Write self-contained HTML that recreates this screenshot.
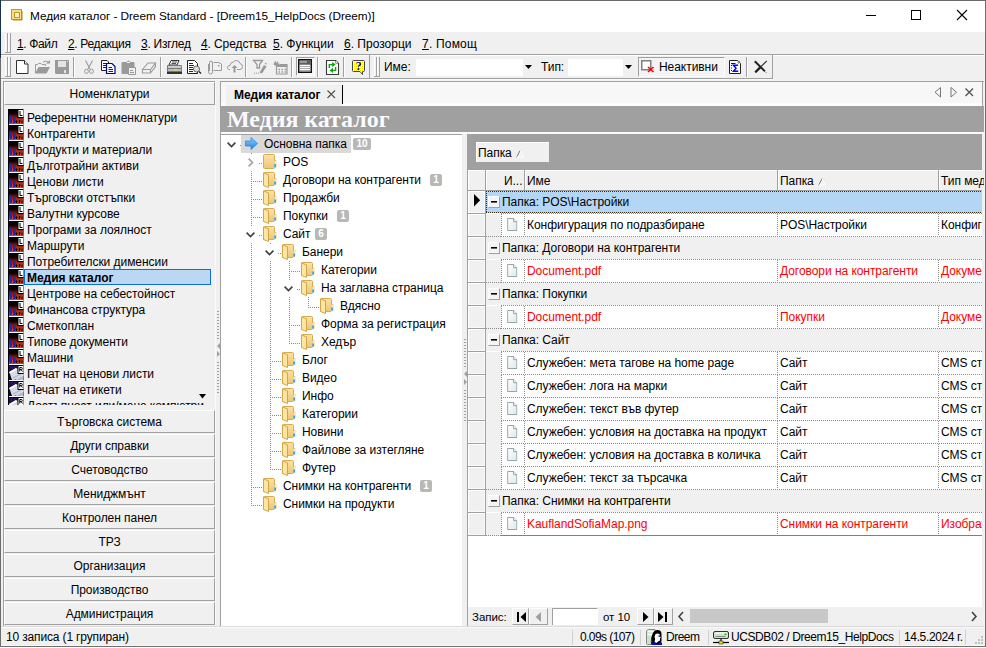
<!DOCTYPE html><html><head><meta charset="utf-8"><title>Медия каталог</title><style>
*{margin:0;padding:0;box-sizing:border-box}
html,body{width:986px;height:648px;overflow:hidden;background:#f0f0f0}
body{position:relative;font-family:"Liberation Sans",sans-serif;font-size:12px;color:#000}
div{position:absolute}
.t{white-space:nowrap;line-height:16px;letter-spacing:-0.05px}
svg{position:absolute;overflow:visible}
</style></head><body>
<div style="left:0px;top:0px;width:986px;height:32px;background:#fff"></div>
<div class="t" style="left:30px;top:8px;font-size:11.8px">Медия каталог - Dreem Standard - [Dreem15_HelpDocs (Dreem)]</div>
<svg style="left:11px;top:9px" width="12" height="12"><rect x="0.5" y="0.5" width="10" height="10" fill="#f3dc8c" stroke="#c89a1a"/><rect x="3.5" y="3.5" width="5" height="5" fill="#f8ecc0" stroke="#c89a1a"/><path d="M11 2V11H2" stroke="#b8860b" fill="none"/></svg>
<div style="left:866px;top:15px;width:10px;height:1px;background:#000"></div>
<div style="left:911px;top:10px;width:10px;height:10px;border:1px solid #000"></div>
<svg style="left:956px;top:9px" width="12" height="12"><path d="M1 1L11 11M11 1L1 11" stroke="#000" stroke-width="1.1"/></svg>
<div class="t" style="left:17px;top:36px;font-size:12px;letter-spacing:-0.37px"><span style="text-decoration:underline">1</span>. Файл</div>
<div class="t" style="left:68px;top:36px;font-size:12px;letter-spacing:-0.33px"><span style="text-decoration:underline">2</span>. Редакция</div>
<div class="t" style="left:141px;top:36px;font-size:12px;letter-spacing:-0.26px"><span style="text-decoration:underline">3</span>. Изглед</div>
<div class="t" style="left:201px;top:36px;font-size:12px;letter-spacing:-0.1px"><span style="text-decoration:underline">4</span>. Средства</div>
<div class="t" style="left:273px;top:36px;font-size:12px;letter-spacing:0px"><span style="text-decoration:underline">5</span>. Функции</div>
<div class="t" style="left:344px;top:36px;font-size:12px;letter-spacing:0px"><span style="text-decoration:underline">6</span>. Прозорци</div>
<div class="t" style="left:422px;top:36px;font-size:12px;letter-spacing:0.2px"><span style="text-decoration:underline">7</span>. Помощ</div>
<div style="left:5px;top:33px;width:3px;height:20px;border-left:1px solid #fff;border-right:1px solid #a0a0a0"></div>
<div style="left:8px;top:33px;width:3px;height:20px;border-left:1px solid #fff;border-right:1px solid #a0a0a0"></div>
<div style="left:5px;top:52px;width:6px;height:1px;background:#a0a0a0"></div>
<div style="left:1px;top:54px;width:984px;height:1px;background:#a0a0a0"></div>
<div style="left:1px;top:55px;width:984px;height:1px;background:#fff"></div>
<div style="left:1px;top:78px;width:772px;height:1px;background:#a0a0a0"></div>
<div style="left:1px;top:79px;width:772px;height:1px;background:#fafafa"></div>
<div style="left:369px;top:55px;width:1px;height:23px;background:#a0a0a0"></div>
<div style="left:772px;top:55px;width:1px;height:23px;background:#a0a0a0"></div>
<div style="left:5px;top:57px;width:3px;height:20px;border-left:1px solid #fff;border-right:1px solid #a0a0a0"></div>
<div style="left:8px;top:57px;width:3px;height:20px;border-left:1px solid #fff;border-right:1px solid #a0a0a0"></div>
<div style="left:5px;top:76px;width:6px;height:1px;background:#a0a0a0"></div>
<div style="left:374px;top:57px;width:3px;height:20px;border-left:1px solid #fff;border-right:1px solid #a0a0a0"></div>
<div style="left:377px;top:57px;width:3px;height:20px;border-left:1px solid #fff;border-right:1px solid #a0a0a0"></div>
<div style="left:374px;top:76px;width:6px;height:1px;background:#a0a0a0"></div>
<div style="left:73px;top:57px;width:1px;height:20px;background:#a0a0a0"></div>
<div style="left:74px;top:57px;width:1px;height:20px;background:#fff"></div>
<div style="left:160px;top:57px;width:1px;height:20px;background:#a0a0a0"></div>
<div style="left:161px;top:57px;width:1px;height:20px;background:#fff"></div>
<div style="left:245px;top:57px;width:1px;height:20px;background:#a0a0a0"></div>
<div style="left:246px;top:57px;width:1px;height:20px;background:#fff"></div>
<div style="left:291px;top:57px;width:1px;height:20px;background:#a0a0a0"></div>
<div style="left:292px;top:57px;width:1px;height:20px;background:#fff"></div>
<div style="left:317px;top:57px;width:1px;height:20px;background:#a0a0a0"></div>
<div style="left:318px;top:57px;width:1px;height:20px;background:#fff"></div>
<div style="left:343px;top:57px;width:1px;height:20px;background:#a0a0a0"></div>
<div style="left:344px;top:57px;width:1px;height:20px;background:#fff"></div>
<div style="left:746px;top:57px;width:1px;height:20px;background:#a0a0a0"></div>
<div style="left:747px;top:57px;width:1px;height:20px;background:#fff"></div>
<div class="t" style="left:384px;top:59px;">Име:</div>
<div style="left:416px;top:59px;width:118px;height:17px;background:#fff"></div>
<div style="left:523px;top:59px;width:11px;height:17px;background:#f0f0f0"></div>
<svg style="left:525px;top:65px" width="8" height="5"><path d="M0 0H7L3.5 4Z" fill="#000"/></svg>
<div class="t" style="left:541px;top:59px;">Тип:</div>
<div style="left:568px;top:59px;width:66px;height:17px;background:#fff"></div>
<div style="left:623px;top:59px;width:11px;height:17px;background:#f0f0f0"></div>
<svg style="left:625px;top:65px" width="8" height="5"><path d="M0 0H7L3.5 4Z" fill="#000"/></svg>
<div style="left:638px;top:57px;width:87px;height:20px;border:1px solid #a0a0a0;border-right-color:#fff;border-bottom-color:#fff;background:#f4f4f4"></div>
<div class="t" style="left:659px;top:59px;">Неактивни</div>
<svg style="left:16px;top:60px" width="13" height="15"><path d="M0.5 0.5H8.5L12 4V13.5H0.5Z" fill="#fff" stroke="#333" stroke-width="1"/><path d="M8.5 0.5V4H12" fill="#fff" stroke="#333"/></svg>
<svg style="left:35px;top:60px" width="16" height="14"><path d="M0.5 13V4.5H2.5L3.5 3.5H6L7 4.5H10.5V6" fill="none" stroke="#9a9a9a"/><path d="M0 13.5L3.5 7H15L11.5 13.5Z" fill="#9a9a9a"/><path d="M8 2.5Q10 0 12.5 1.5L13.5 3" fill="none" stroke="#9a9a9a"/><path d="M11 3.5H15V0Z" fill="#9a9a9a"/></svg>
<svg style="left:55px;top:60px" width="14" height="14"><path d="M0 0H14V14H1L0 13Z" fill="#9a9a9a"/><rect x="3" y="1" width="8" height="6" fill="#e4e4e4"/><rect x="9" y="10" width="2" height="3" fill="#e4e4e4"/><rect x="12" y="1" width="1" height="1" fill="#e4e4e4"/></svg>
<svg style="left:84px;top:60px" width="10" height="14"><path d="M1.5 0.5L6 9M8.5 0.5L4 9" stroke="#9a9a9a" stroke-width="1.1" fill="none"/><ellipse cx="2.5" cy="11.3" rx="1.9" ry="2.1" fill="none" stroke="#9a9a9a"/><ellipse cx="7.5" cy="11.3" rx="1.9" ry="2.1" fill="none" stroke="#9a9a9a"/></svg>
<svg style="left:101px;top:60px" width="15" height="14"><path d="M0.5 0.5H6L7.5 2V10.5H0.5Z" fill="#fff" stroke="#222"/><path d="M2 3.5H5M2 5.5H5M2 7.5H5" stroke="#222"/><path d="M5.5 3.5H11L14 6.5V13.5H5.5Z" fill="#fff" stroke="#00009a" stroke-width="1.2"/><path d="M7.5 7.5H11M7.5 9.5H12M7.5 11.5H12" stroke="#222"/></svg>
<svg style="left:121px;top:60px" width="16" height="15"><path d="M1.5 2H5.5L7.5 0.5L9.5 2H12.5Q13.5 2 13.5 3V13Q13.5 14 12.5 14H1.5Q0.5 14 0.5 13V3Q0.5 2 1.5 2Z" fill="#9a9a9a"/><path d="M6 2.5H9" stroke="#fff"/><path d="M7.5 7.5H14.5V14.5H7.5Z" fill="#f0f0f0" stroke="#9a9a9a"/><path d="M9 10.5H12M9 12.5H13" stroke="#9a9a9a"/></svg>
<svg style="left:142px;top:62px" width="14" height="12"><path d="M0.5 7.5L6 1H13.5L8.5 7.5ZM0.5 7.5V11H8.5V7.5M8.5 11L13.5 4.5V1" fill="none" stroke="#9a9a9a" stroke-width="1.1"/></svg>
<svg style="left:167px;top:60px" width="16" height="14"><path d="M4 0.5H12L10 5H2Z" fill="#fff" stroke="#333"/><path d="M5 2H10M4.5 3.5H9" stroke="#555"/><path d="M1 5H14Q15 5 15 6V12H0V6Q0 5 1 5Z" fill="#777"/><rect x="1" y="6" width="13" height="2" fill="#ccc"/><rect x="1" y="9" width="13" height="2" fill="#bbb"/><rect x="7" y="9" width="3" height="1.5" fill="#ffe000"/><rect x="0" y="12" width="15" height="2" fill="#333"/><path d="M13 5.5L15 7M13 8.5L15 10" stroke="#999"/></svg>
<svg style="left:187px;top:60px" width="15" height="15"><path d="M0.5 0.5H7.5L10.5 3.5V13.5H0.5Z" fill="#fff" stroke="#222"/><path d="M2 3.5H6M2 5.5H7M2 7.5H6M2 9.5H6M2 11.5H6" stroke="#1010d0"/><circle cx="9.5" cy="9" r="3" fill="#ddd" stroke="#666"/><path d="M12 11.5L14 13.5" stroke="#222" stroke-width="1.5"/></svg>
<svg style="left:207px;top:60px" width="16" height="15"><path d="M6.5 2.5H11.5L14.5 4V10.5H6.5" fill="none" stroke="#9a9a9a"/><rect x="11" y="5" width="1.5" height="1.5" fill="#9a9a9a"/><path d="M1.5 4V12Q1.5 14 3.5 14Q5.5 14 5.5 12V3Q5.5 1 4 1Q2.5 1 2.5 3V11" fill="none" stroke="#9a9a9a"/></svg>
<svg style="left:227px;top:60px" width="16" height="13"><path d="M3 9.5H1.5Q0.5 9 0.5 7.5Q0.5 5.5 3 5.5Q3.5 2 6.5 2Q7.5 0.5 9.5 0.5Q12.5 0.5 13 3.5Q15.5 4 15.5 6.5Q15.5 9.5 13 9.5H10" fill="none" stroke="#9a9a9a"/><path d="M4.5 8L7.5 5L10.5 8H8.5V12.5H6.5V8Z" fill="#9a9a9a"/></svg>
<svg style="left:253px;top:60px" width="14" height="14"><path d="M0.5 0.5H9.5L6.5 4.5V8H4V4.5Z" fill="none" stroke="#9a9a9a" stroke-width="1.3"/><path d="M6.5 12.5L11 5L13.5 6.5L9 13.5Z" fill="#9a9a9a"/><path d="M11.5 4L13 2.5L14 4.5Z" fill="#9a9a9a"/><path d="M1 13.2H2M3 13.2H4M5 13.2H6" stroke="#9a9a9a"/></svg>
<svg style="left:273px;top:60px" width="15" height="15"><path d="M0.5 4.5L2 0.5L3.5 3L5 1L5.5 4L7 3.5L5 7L3 6Z" fill="#9a9a9a"/><path d="M3.5 6V14H14V4.5H6.5" fill="none" stroke="#9a9a9a" stroke-width="1.2"/><path d="M5 5H14V7H5Z" fill="#9a9a9a"/><path d="M5.5 9.5H7M8.5 9.5H10M11.5 9.5H13M5.5 12H7M8.5 12H10M11.5 12H13" stroke="#9a9a9a" stroke-width="1.3"/></svg>
<div style="left:296px;top:57px;width:19px;height:19px;border:1px solid #a0a0a0;border-right-color:#fff;border-bottom-color:#fff;background:repeating-conic-gradient(#f0f0f0 0 25%,#fafafa 0 50%) 0 0/2px 2px"></div>
<svg style="left:298px;top:59px" width="14" height="14"><rect x="0.75" y="0.75" width="12.5" height="12.5" fill="#fff" stroke="#111" stroke-width="1.5"/><rect x="1.5" y="1.5" width="11" height="3" fill="#555"/><rect x="2" y="2" width="7" height="2" fill="#999"/><path d="M1.5 5H12.5" stroke="#111"/><path d="M1.5 7.5H12.5M1.5 9.5H12.5M1.5 11.5H12.5" stroke="#aaa"/></svg>
<svg style="left:326px;top:60px" width="14" height="15"><path d="M0.5 0.5H9.5L12.5 3.5V14.5H0.5Z" fill="#fff" stroke="#3a3a3a" stroke-width="1.1"/><circle cx="10.5" cy="2.3" r="1.2" fill="#fff" stroke="#3a3a3a" stroke-width="0.6"/><path d="M3.3 8V4.6H7" fill="none" stroke="#10a010" stroke-width="1.4"/><path d="M6.2 2L9.6 4.6L6.2 7.2Z" fill="#10a010"/><path d="M9.6 7V10.4H6" fill="none" stroke="#10a010" stroke-width="1.4"/><path d="M7 7.8L3.6 10.4L7 13Z" fill="#10a010"/></svg>
<svg style="left:352px;top:60px" width="13" height="15"><defs><pattern id="pY" width="2" height="2" patternUnits="userSpaceOnUse"><rect width="1" height="1" fill="#ffe800"/></pattern></defs><path d="M1.5 0.5H11.5Q12.5 0.5 12.5 1.5V10.5Q12.5 11.5 11.5 11.5H10.5L10.5 14.5L8 11.5H1.5Q0.5 11.5 0.5 10.5V1.5Q0.5 0.5 1.5 0.5Z" fill="#fff" stroke="#444"/><rect x="1" y="1" width="11" height="10" fill="url(#pY)"/><text x="6.7" y="9.6" font-family="Liberation Serif" font-weight="bold" font-size="12" fill="#0000a8" text-anchor="middle">?</text></svg>
<svg style="left:641px;top:60px" width="14" height="13"><rect x="0.75" y="0.75" width="9" height="9" fill="#fff" stroke="#808080" stroke-width="1.5"/><path d="M7 7L12.5 12M12.5 7L7 12" stroke="#f00" stroke-width="1.6"/></svg>
<svg style="left:729px;top:60px" width="13" height="14"><path d="M0.5 0.5H8.5L11.5 3.5V13.5H0.5Z" fill="#fff" stroke="#222"/><circle cx="9.8" cy="2.2" r="1" fill="#fff" stroke="#222" stroke-width="0.6"/><path d="M2 3.5H6.5" stroke="#0000e0"/><path d="M2.5 5V6M2.5 7.5V8.5M2.5 10V11" stroke="#0000e0"/><path d="M9 5.3H4.5L7 8.2L4.5 11.2H9.2" fill="none" stroke="#0000ff" stroke-width="1.5"/></svg>
<svg style="left:754px;top:60px" width="14" height="14"><path d="M0.8 1.2L11 11.4" stroke="#222" stroke-width="2"/><path d="M12 12.4L12.6 13" stroke="#444"/><path d="M12.8 0.8L7 6.6" stroke="#333" stroke-width="1.2"/><path d="M7 6.6L1.2 12.4" stroke="#222" stroke-width="2.2"/></svg>
<div style="left:3px;top:81px;width:213px;height:545px;border:1px solid #a0a0a0;border-right:none;border-bottom:none"></div>
<div style="left:4px;top:82px;width:211px;height:23px;background:#f0f0f0;border-top:1px solid #fff;border-left:1px solid #fff;border-bottom:1px solid #a0a0a0;border-right:1px solid #a0a0a0"></div>
<div class="t" style="left:4px;top:86px;font-size:12px"><div style="position:static;width:211px;text-align:center">Номенклатури</div></div>
<div style="left:4px;top:105px;width:211px;height:300px;overflow:hidden">
<svg style="left:4px;top:4px" width="16" height="16"><use href="#icL"/></svg>
<div class="t" style="left:23px;top:5px">Референтни номенклатури</div>
<svg style="left:4px;top:20px" width="16" height="16"><use href="#icL"/></svg>
<div class="t" style="left:23px;top:21px">Контрагенти</div>
<svg style="left:4px;top:36px" width="16" height="16"><use href="#icL"/></svg>
<div class="t" style="left:23px;top:37px">Продукти и материали</div>
<svg style="left:4px;top:52px" width="16" height="16"><use href="#icL"/></svg>
<div class="t" style="left:23px;top:53px">Дълготрайни активи</div>
<svg style="left:4px;top:68px" width="16" height="16"><use href="#icL"/></svg>
<div class="t" style="left:23px;top:69px">Ценови листи</div>
<svg style="left:4px;top:84px" width="16" height="16"><use href="#icL"/></svg>
<div class="t" style="left:23px;top:85px">Търговски отстъпки</div>
<svg style="left:4px;top:100px" width="16" height="16"><use href="#icL"/></svg>
<div class="t" style="left:23px;top:101px">Валутни курсове</div>
<svg style="left:4px;top:116px" width="16" height="16"><use href="#icL"/></svg>
<div class="t" style="left:23px;top:117px">Програми за лоялност</div>
<svg style="left:4px;top:132px" width="16" height="16"><use href="#icL"/></svg>
<div class="t" style="left:23px;top:133px">Маршрути</div>
<svg style="left:4px;top:148px" width="16" height="16"><use href="#icL"/></svg>
<div class="t" style="left:23px;top:149px">Потребителски дименсии</div>
<svg style="left:4px;top:164px" width="16" height="16"><use href="#icL"/></svg>
<div style="left:20px;top:164px;width:187px;height:16px;background:#bad8f3;border:1px solid #0a6fd8"></div>
<div class="t" style="left:23px;top:165px;font-weight:bold">Медия каталог</div>
<svg style="left:4px;top:180px" width="16" height="16"><use href="#icL"/></svg>
<div class="t" style="left:23px;top:181px">Центрове на себестойност</div>
<svg style="left:4px;top:196px" width="16" height="16"><use href="#icL"/></svg>
<div class="t" style="left:23px;top:197px">Финансова структура</div>
<svg style="left:4px;top:212px" width="16" height="16"><use href="#icL"/></svg>
<div class="t" style="left:23px;top:213px">Сметкоплан</div>
<svg style="left:4px;top:228px" width="16" height="16"><use href="#icL"/></svg>
<div class="t" style="left:23px;top:229px">Типове документи</div>
<svg style="left:4px;top:244px" width="16" height="16"><use href="#icL"/></svg>
<div class="t" style="left:23px;top:245px">Машини</div>
<svg style="left:4px;top:260px" width="16" height="16"><use href="#icR"/></svg>
<div class="t" style="left:23px;top:261px">Печат на ценови листи</div>
<svg style="left:4px;top:276px" width="16" height="16"><use href="#icR"/></svg>
<div class="t" style="left:23px;top:277px">Печат на етикети</div>
<svg style="left:4px;top:292px" width="16" height="16"><use href="#icR"/></svg>
<div class="t" style="left:23px;top:293px">Достъпност или/мене компютри</div>
</div>
<svg style="left:199px;top:394px" width="8" height="6"><path d="M0 0H7L3.5 4.5Z" fill="#000"/></svg>
<div style="left:4px;top:410px;width:211px;height:23px;background:#f0f0f0;border-top:1px solid #fff;border-left:1px solid #fff;border-bottom:1px solid #a0a0a0;border-right:1px solid #a0a0a0"></div>
<div class="t" style="left:4px;top:414px;width:211px;text-align:center">Търговска система</div>
<div style="left:4px;top:434px;width:211px;height:23px;background:#f0f0f0;border-top:1px solid #fff;border-left:1px solid #fff;border-bottom:1px solid #a0a0a0;border-right:1px solid #a0a0a0"></div>
<div class="t" style="left:4px;top:438px;width:211px;text-align:center">Други справки</div>
<div style="left:4px;top:458px;width:211px;height:23px;background:#f0f0f0;border-top:1px solid #fff;border-left:1px solid #fff;border-bottom:1px solid #a0a0a0;border-right:1px solid #a0a0a0"></div>
<div class="t" style="left:4px;top:462px;width:211px;text-align:center">Счетоводство</div>
<div style="left:4px;top:482px;width:211px;height:23px;background:#f0f0f0;border-top:1px solid #fff;border-left:1px solid #fff;border-bottom:1px solid #a0a0a0;border-right:1px solid #a0a0a0"></div>
<div class="t" style="left:4px;top:486px;width:211px;text-align:center">Мениджмънт</div>
<div style="left:4px;top:506px;width:211px;height:23px;background:#f0f0f0;border-top:1px solid #fff;border-left:1px solid #fff;border-bottom:1px solid #a0a0a0;border-right:1px solid #a0a0a0"></div>
<div class="t" style="left:4px;top:510px;width:211px;text-align:center">Контролен панел</div>
<div style="left:4px;top:530px;width:211px;height:23px;background:#f0f0f0;border-top:1px solid #fff;border-left:1px solid #fff;border-bottom:1px solid #a0a0a0;border-right:1px solid #a0a0a0"></div>
<div class="t" style="left:4px;top:534px;width:211px;text-align:center">ТРЗ</div>
<div style="left:4px;top:554px;width:211px;height:23px;background:#f0f0f0;border-top:1px solid #fff;border-left:1px solid #fff;border-bottom:1px solid #a0a0a0;border-right:1px solid #a0a0a0"></div>
<div class="t" style="left:4px;top:558px;width:211px;text-align:center">Организация</div>
<div style="left:4px;top:578px;width:211px;height:23px;background:#f0f0f0;border-top:1px solid #fff;border-left:1px solid #fff;border-bottom:1px solid #a0a0a0;border-right:1px solid #a0a0a0"></div>
<div class="t" style="left:4px;top:582px;width:211px;text-align:center">Производство</div>
<div style="left:4px;top:602px;width:211px;height:23px;background:#f0f0f0;border-top:1px solid #fff;border-left:1px solid #fff;border-bottom:1px solid #a0a0a0;border-right:1px solid #a0a0a0"></div>
<div class="t" style="left:4px;top:606px;width:211px;text-align:center">Администрация</div>
<div style="left:220px;top:81px;width:764px;height:545px;border-left:1px solid #a0a0a0;border-top:1px solid #a0a0a0"></div>
<div style="left:221px;top:82px;width:762px;height:24px;background:#fdfdfd;border-right:1px solid #a0a0a0"></div>
<div style="left:221px;top:82px;width:761px;height:21px;background:#f7f7f7"></div>
<div style="left:221px;top:132px;width:763px;height:2px;background:#fafafa"></div>
<div style="left:226px;top:85px;width:116px;height:21px;background:#f0f0f0"></div>
<div style="left:342px;top:85px;width:1px;height:19px;background:#000"></div>
<div class="t" style="left:234px;top:87px;font-weight:bold">Медия каталог</div>
<svg style="left:327px;top:90px" width="9" height="9"><path d="M0.5 0.5L8 8M8 0.5L0.5 8" stroke="#555" stroke-width="1.2"/></svg>
<svg style="left:934px;top:87px" width="8" height="11"><path d="M6.5 0.5V10L1 5.25Z" fill="none" stroke="#777"/></svg>
<svg style="left:950px;top:87px" width="8" height="11"><path d="M1 0.5V10L6.5 5.25Z" fill="none" stroke="#777"/></svg>
<svg style="left:965px;top:88px" width="9" height="9"><path d="M0.5 0.5L8 8M8 0.5L0.5 8" stroke="#555" stroke-width="1.4"/></svg>
<div style="left:221px;top:106px;width:763px;height:26px;background:#a0a0a0"></div>
<div class="t" style="left:227px;top:106px;line-height:26px;font-family:'Liberation Serif',serif;font-weight:bold;font-size:24px;color:#fbfbff">Медия каталог</div>
<div style="left:221px;top:134px;width:241px;height:492px;background:#fff;border-top:1px solid #a0a0a0"></div>
<div style="left:467px;top:134px;width:515px;height:492px;background:#fff;border-left:1px solid #a0a0a0"></div>
<div style="left:982px;top:134px;width:2px;height:492px;background:#f0f0f0"></div>
<div style="left:468px;top:134px;width:514px;height:36px;background:#a0a0a0"></div>
<div style="left:476px;top:142px;width:73px;height:20px;background:#f0f0f0"></div>
<div class="t" style="left:478px;top:145px;">Папка</div>
<div style="left:476px;top:142px;width:73px;height:1px;background:#fff"></div>
<div style="left:476px;top:142px;width:1px;height:20px;background:#fff"></div>
<svg style="left:516px;top:150px" width="9" height="8"><path d="M0.5 7.5L4 0.5" stroke="#808080"/><path d="M4 0.5L7.5 7H0.5" fill="none" stroke="#fff"/></svg>
<div style="left:251px;top:153px;width:1px;height:352px;background:repeating-linear-gradient(to bottom,#8c8c8c 0 1px,transparent 1px 2px)"></div>
<div style="left:270px;top:243px;width:1px;height:226px;background:repeating-linear-gradient(to bottom,#8c8c8c 0 1px,transparent 1px 2px)"></div>
<div style="left:289px;top:261px;width:1px;height:82px;background:repeating-linear-gradient(to bottom,#8c8c8c 0 1px,transparent 1px 2px)"></div>
<div style="left:308px;top:297px;width:1px;height:10px;background:repeating-linear-gradient(to bottom,#8c8c8c 0 1px,transparent 1px 2px)"></div>
<div style="left:240px;top:145px;width:4px;height:1px;background:repeating-linear-gradient(to right,#8c8c8c 0 1px,transparent 1px 2px)"></div>
<div style="left:241px;top:135px;width:110px;height:18px;background:#d9d9d9"></div>
<div style="left:226px;top:136px;width:13px;height:16px;background:#fff"></div>
<svg style="left:227px;top:142px" width="10" height="6"><path d="M0.6 0.6L4.5 4.5L8.4 0.6" stroke="#404040" stroke-width="1.6" fill="none"/></svg>
<svg style="left:245px;top:137px" width="13" height="13"><use href="#icArrow"/></svg>
<div class="t" style="left:264px;top:136px">Основна папка</div>
<div style="left:353px;top:138px;width:18px;height:12px;background:#b8b8b8;border-radius:2px;color:#fff;font-size:10px;font-weight:bold;line-height:12px;text-align:center">10</div>
<div style="left:251px;top:163px;width:11px;height:1px;background:repeating-linear-gradient(to right,#8c8c8c 0 1px,transparent 1px 2px)"></div>
<div style="left:245px;top:154px;width:13px;height:16px;background:#fff"></div>
<svg style="left:248px;top:158px" width="6" height="10"><path d="M0.6 0.6L4.5 4.5L0.6 8.4" stroke="#a0a0a0" stroke-width="1.6" fill="none"/></svg>
<svg style="left:263px;top:154px" width="14" height="16"><use href="#icFc"/></svg>
<div class="t" style="left:283px;top:154px">POS</div>
<div style="left:251px;top:181px;width:11px;height:1px;background:repeating-linear-gradient(to right,#8c8c8c 0 1px,transparent 1px 2px)"></div>
<svg style="left:263px;top:172px" width="14" height="16"><use href="#icFo"/></svg>
<div class="t" style="left:283px;top:172px">Договори на контрагенти</div>
<div style="left:430px;top:174px;width:12px;height:12px;background:#b8b8b8;border-radius:2px;color:#fff;font-size:10px;font-weight:bold;line-height:12px;text-align:center">1</div>
<div style="left:251px;top:199px;width:11px;height:1px;background:repeating-linear-gradient(to right,#8c8c8c 0 1px,transparent 1px 2px)"></div>
<svg style="left:263px;top:190px" width="14" height="16"><use href="#icFo"/></svg>
<div class="t" style="left:283px;top:190px">Продажби</div>
<div style="left:251px;top:217px;width:11px;height:1px;background:repeating-linear-gradient(to right,#8c8c8c 0 1px,transparent 1px 2px)"></div>
<svg style="left:263px;top:208px" width="14" height="16"><use href="#icFo"/></svg>
<div class="t" style="left:283px;top:208px">Покупки</div>
<div style="left:337px;top:210px;width:12px;height:12px;background:#b8b8b8;border-radius:2px;color:#fff;font-size:10px;font-weight:bold;line-height:12px;text-align:center">1</div>
<div style="left:251px;top:235px;width:11px;height:1px;background:repeating-linear-gradient(to right,#8c8c8c 0 1px,transparent 1px 2px)"></div>
<div style="left:245px;top:226px;width:13px;height:16px;background:#fff"></div>
<svg style="left:246px;top:232px" width="10" height="6"><path d="M0.6 0.6L4.5 4.5L8.4 0.6" stroke="#404040" stroke-width="1.6" fill="none"/></svg>
<svg style="left:263px;top:226px" width="14" height="16"><use href="#icFo"/></svg>
<div class="t" style="left:283px;top:226px">Сайт</div>
<div style="left:315px;top:228px;width:12px;height:12px;background:#b8b8b8;border-radius:2px;color:#fff;font-size:10px;font-weight:bold;line-height:12px;text-align:center">6</div>
<div style="left:270px;top:253px;width:11px;height:1px;background:repeating-linear-gradient(to right,#8c8c8c 0 1px,transparent 1px 2px)"></div>
<div style="left:264px;top:244px;width:13px;height:16px;background:#fff"></div>
<svg style="left:265px;top:250px" width="10" height="6"><path d="M0.6 0.6L4.5 4.5L8.4 0.6" stroke="#404040" stroke-width="1.6" fill="none"/></svg>
<svg style="left:282px;top:244px" width="14" height="16"><use href="#icFo"/></svg>
<div class="t" style="left:302px;top:244px">Банери</div>
<div style="left:289px;top:271px;width:11px;height:1px;background:repeating-linear-gradient(to right,#8c8c8c 0 1px,transparent 1px 2px)"></div>
<svg style="left:301px;top:262px" width="14" height="16"><use href="#icFo"/></svg>
<div class="t" style="left:321px;top:262px">Категории</div>
<div style="left:289px;top:289px;width:11px;height:1px;background:repeating-linear-gradient(to right,#8c8c8c 0 1px,transparent 1px 2px)"></div>
<div style="left:283px;top:280px;width:13px;height:16px;background:#fff"></div>
<svg style="left:284px;top:286px" width="10" height="6"><path d="M0.6 0.6L4.5 4.5L8.4 0.6" stroke="#404040" stroke-width="1.6" fill="none"/></svg>
<svg style="left:301px;top:280px" width="14" height="16"><use href="#icFo"/></svg>
<div class="t" style="left:321px;top:280px">На заглавна страница</div>
<div style="left:308px;top:307px;width:11px;height:1px;background:repeating-linear-gradient(to right,#8c8c8c 0 1px,transparent 1px 2px)"></div>
<svg style="left:320px;top:298px" width="14" height="16"><use href="#icFo"/></svg>
<div class="t" style="left:340px;top:298px">Вдясно</div>
<div style="left:289px;top:325px;width:11px;height:1px;background:repeating-linear-gradient(to right,#8c8c8c 0 1px,transparent 1px 2px)"></div>
<svg style="left:301px;top:316px" width="14" height="16"><use href="#icFo"/></svg>
<div class="t" style="left:321px;top:316px">Форма за регистрация</div>
<div style="left:289px;top:343px;width:11px;height:1px;background:repeating-linear-gradient(to right,#8c8c8c 0 1px,transparent 1px 2px)"></div>
<svg style="left:301px;top:334px" width="14" height="16"><use href="#icFo"/></svg>
<div class="t" style="left:321px;top:334px">Хедър</div>
<div style="left:270px;top:361px;width:11px;height:1px;background:repeating-linear-gradient(to right,#8c8c8c 0 1px,transparent 1px 2px)"></div>
<svg style="left:282px;top:352px" width="14" height="16"><use href="#icFo"/></svg>
<div class="t" style="left:302px;top:352px">Блог</div>
<div style="left:270px;top:379px;width:11px;height:1px;background:repeating-linear-gradient(to right,#8c8c8c 0 1px,transparent 1px 2px)"></div>
<svg style="left:282px;top:370px" width="14" height="16"><use href="#icFo"/></svg>
<div class="t" style="left:302px;top:370px">Видео</div>
<div style="left:270px;top:397px;width:11px;height:1px;background:repeating-linear-gradient(to right,#8c8c8c 0 1px,transparent 1px 2px)"></div>
<svg style="left:282px;top:388px" width="14" height="16"><use href="#icFo"/></svg>
<div class="t" style="left:302px;top:388px">Инфо</div>
<div style="left:270px;top:415px;width:11px;height:1px;background:repeating-linear-gradient(to right,#8c8c8c 0 1px,transparent 1px 2px)"></div>
<svg style="left:282px;top:406px" width="14" height="16"><use href="#icFo"/></svg>
<div class="t" style="left:302px;top:406px">Категории</div>
<div style="left:270px;top:433px;width:11px;height:1px;background:repeating-linear-gradient(to right,#8c8c8c 0 1px,transparent 1px 2px)"></div>
<svg style="left:282px;top:424px" width="14" height="16"><use href="#icFo"/></svg>
<div class="t" style="left:302px;top:424px">Новини</div>
<div style="left:270px;top:451px;width:11px;height:1px;background:repeating-linear-gradient(to right,#8c8c8c 0 1px,transparent 1px 2px)"></div>
<svg style="left:282px;top:442px" width="14" height="16"><use href="#icFo"/></svg>
<div class="t" style="left:302px;top:442px">Файлове за изтегляне</div>
<div style="left:270px;top:469px;width:11px;height:1px;background:repeating-linear-gradient(to right,#8c8c8c 0 1px,transparent 1px 2px)"></div>
<svg style="left:282px;top:460px" width="14" height="16"><use href="#icFo"/></svg>
<div class="t" style="left:302px;top:460px">Футер</div>
<div style="left:251px;top:487px;width:11px;height:1px;background:repeating-linear-gradient(to right,#8c8c8c 0 1px,transparent 1px 2px)"></div>
<svg style="left:263px;top:478px" width="14" height="16"><use href="#icFo"/></svg>
<div class="t" style="left:283px;top:478px">Снимки на контрагенти</div>
<div style="left:420px;top:480px;width:12px;height:12px;background:#b8b8b8;border-radius:2px;color:#fff;font-size:10px;font-weight:bold;line-height:12px;text-align:center">1</div>
<div style="left:251px;top:505px;width:11px;height:1px;background:repeating-linear-gradient(to right,#8c8c8c 0 1px,transparent 1px 2px)"></div>
<svg style="left:263px;top:496px" width="14" height="16"><use href="#icFo"/></svg>
<div class="t" style="left:283px;top:496px">Снимки на продукти</div>
<div style="left:462px;top:134px;width:5px;height:492px;background:#f0f0f0"></div>
<div style="left:468px;top:170px;width:514px;height:21px;background:#f0f0f0;border-bottom:1px solid #a0a0a0"></div>
<div style="left:468px;top:170px;width:514px;height:1px;background:#fff"></div>
<div style="left:485px;top:170px;width:1px;height:21px;background:#a0a0a0"></div>
<div style="left:486px;top:170px;width:1px;height:20px;background:#fff"></div>
<div style="left:524px;top:170px;width:1px;height:21px;background:#a0a0a0"></div>
<div style="left:525px;top:170px;width:1px;height:20px;background:#fff"></div>
<div style="left:777px;top:170px;width:1px;height:21px;background:#a0a0a0"></div>
<div style="left:778px;top:170px;width:1px;height:20px;background:#fff"></div>
<div style="left:938px;top:170px;width:1px;height:21px;background:#a0a0a0"></div>
<div style="left:939px;top:170px;width:1px;height:20px;background:#fff"></div>
<div style="left:468px;top:170px;width:1px;height:20px;background:#fff"></div>
<div class="t" style="left:504px;top:173px;">И...</div>
<div class="t" style="left:527px;top:173px;">Име</div>
<div class="t" style="left:780px;top:173px;">Папка</div>
<svg style="left:818px;top:178px" width="9" height="8"><path d="M0.5 7.5L4 0.5" stroke="#808080"/><path d="M4 0.5L7.5 7H0.5" fill="none" stroke="#fff"/></svg>
<div class="t" style="left:941px;top:173px;">Тип медия</div>
<div style="left:468px;top:191px;width:514px;height:346px;overflow:hidden">
<div style="left:0;top:0px;width:18px;height:23px;background:#f0f0f0;border-right:1px solid #a0a0a0;border-bottom:1px solid #a0a0a0;box-shadow:inset 1px 1px 0 #fff,inset -1px -1px 0 #fafafa"></div>
<div style="left:18px;top:0px;width:497px;height:22px;background:#b3d6f5"></div>
<div style="left:33px;top:22px;width:482px;height:1px;background:#f0f0f0;background:repeating-linear-gradient(to right,#8c8c8c 0 1px,transparent 1px 2px)"></div>
<div style="left:20px;top:5px;width:12px;height:12px;background:#f4f4f4;border:1px solid #fff;border-right-color:#a0a0a0;border-bottom-color:#a0a0a0"></div>
<div style="left:23px;top:10px;width:6px;height:2px;background:linear-gradient(#000 50%,#666 50%)"></div>
<div class="t" style="left:34px;top:3px">Папка: POS\Настройки</div>
<div style="left:18px;top:0px;width:497px;height:1px;background:repeating-linear-gradient(to right,#3a2a10 0 1px,transparent 1px 2px)"></div>
<div style="left:18px;top:21px;width:497px;height:1px;background:repeating-linear-gradient(to right,#3a2a10 0 1px,transparent 1px 2px)"></div>
<div style="left:18px;top:0px;width:1px;height:22px;background:repeating-linear-gradient(to bottom,#3a2a10 0 1px,transparent 1px 2px)"></div>
<svg style="left:6px;top:3px" width="7" height="13"><path d="M0 0L6.2 6.2L0 12.4Z" fill="#000"/></svg>
<div style="left:0;top:23px;width:18px;height:23px;background:#f0f0f0;border-right:1px solid #a0a0a0;border-bottom:1px solid #a0a0a0;box-shadow:inset 1px 1px 0 #fff,inset -1px -1px 0 #fafafa"></div>
<div style="left:18px;top:23px;width:15px;height:23px;background:#f0f0f0"></div>
<div style="left:33px;top:23px;width:482px;height:22px;background:#fff"></div>
<div style="left:33px;top:45px;width:482px;height:1px;background:#fff;background:repeating-linear-gradient(to right,#8c8c8c 0 1px,transparent 1px 2px)"></div>
<div style="left:18px;top:45px;width:15px;height:1px;background:repeating-linear-gradient(to right,#8c8c8c 0 1px,transparent 1px 2px)"></div>
<div style="left:33px;top:23px;width:1px;height:22px;background:repeating-linear-gradient(to bottom,#8c8c8c 0 1px,transparent 1px 2px)"></div>
<div style="left:56px;top:23px;width:1px;height:22px;background:repeating-linear-gradient(to bottom,#8c8c8c 0 1px,transparent 1px 2px)"></div>
<div style="left:309px;top:23px;width:1px;height:22px;background:repeating-linear-gradient(to bottom,#8c8c8c 0 1px,transparent 1px 2px)"></div>
<div style="left:470px;top:23px;width:1px;height:22px;background:repeating-linear-gradient(to bottom,#8c8c8c 0 1px,transparent 1px 2px)"></div>
<svg style="left:39px;top:27px" width="10.5" height="13" viewBox="0 0 11 14"><use href="#icDoc"/></svg>
<div class="t" style="left:59px;top:26px;color:#000">Конфигурация по подразбиране</div>
<div class="t" style="left:312px;top:26px;color:#000">POS\Настройки</div>
<div class="t" style="left:473px;top:26px;color:#000">Конфигурация</div>
<div style="left:0;top:46px;width:18px;height:23px;background:#f0f0f0;border-right:1px solid #a0a0a0;border-bottom:1px solid #a0a0a0;box-shadow:inset 1px 1px 0 #fff,inset -1px -1px 0 #fafafa"></div>
<div style="left:18px;top:46px;width:497px;height:22px;background:#f0f0f0"></div>
<div style="left:33px;top:68px;width:482px;height:1px;background:#f0f0f0;background:repeating-linear-gradient(to right,#8c8c8c 0 1px,transparent 1px 2px)"></div>
<div style="left:20px;top:51px;width:12px;height:12px;background:#f4f4f4;border:1px solid #fff;border-right-color:#a0a0a0;border-bottom-color:#a0a0a0"></div>
<div style="left:23px;top:56px;width:6px;height:2px;background:linear-gradient(#000 50%,#666 50%)"></div>
<div class="t" style="left:34px;top:49px">Папка: Договори на контрагенти</div>
<div style="left:0;top:69px;width:18px;height:23px;background:#f0f0f0;border-right:1px solid #a0a0a0;border-bottom:1px solid #a0a0a0;box-shadow:inset 1px 1px 0 #fff,inset -1px -1px 0 #fafafa"></div>
<div style="left:18px;top:69px;width:15px;height:23px;background:#f0f0f0"></div>
<div style="left:33px;top:69px;width:482px;height:22px;background:#fff"></div>
<div style="left:33px;top:91px;width:482px;height:1px;background:#fff;background:repeating-linear-gradient(to right,#8c8c8c 0 1px,transparent 1px 2px)"></div>
<div style="left:18px;top:91px;width:15px;height:1px;background:repeating-linear-gradient(to right,#8c8c8c 0 1px,transparent 1px 2px)"></div>
<div style="left:33px;top:69px;width:1px;height:22px;background:repeating-linear-gradient(to bottom,#8c8c8c 0 1px,transparent 1px 2px)"></div>
<div style="left:56px;top:69px;width:1px;height:22px;background:repeating-linear-gradient(to bottom,#8c8c8c 0 1px,transparent 1px 2px)"></div>
<div style="left:309px;top:69px;width:1px;height:22px;background:repeating-linear-gradient(to bottom,#8c8c8c 0 1px,transparent 1px 2px)"></div>
<div style="left:470px;top:69px;width:1px;height:22px;background:repeating-linear-gradient(to bottom,#8c8c8c 0 1px,transparent 1px 2px)"></div>
<svg style="left:39px;top:73px" width="10.5" height="13" viewBox="0 0 11 14"><use href="#icDoc"/></svg>
<div class="t" style="left:59px;top:72px;color:#ff0000">Document.pdf</div>
<div class="t" style="left:312px;top:72px;color:#ff0000">Договори на контрагенти</div>
<div class="t" style="left:473px;top:72px;color:#ff0000">Документ</div>
<div style="left:0;top:92px;width:18px;height:23px;background:#f0f0f0;border-right:1px solid #a0a0a0;border-bottom:1px solid #a0a0a0;box-shadow:inset 1px 1px 0 #fff,inset -1px -1px 0 #fafafa"></div>
<div style="left:18px;top:92px;width:497px;height:22px;background:#f0f0f0"></div>
<div style="left:33px;top:114px;width:482px;height:1px;background:#f0f0f0;background:repeating-linear-gradient(to right,#8c8c8c 0 1px,transparent 1px 2px)"></div>
<div style="left:20px;top:97px;width:12px;height:12px;background:#f4f4f4;border:1px solid #fff;border-right-color:#a0a0a0;border-bottom-color:#a0a0a0"></div>
<div style="left:23px;top:102px;width:6px;height:2px;background:linear-gradient(#000 50%,#666 50%)"></div>
<div class="t" style="left:34px;top:95px">Папка: Покупки</div>
<div style="left:0;top:115px;width:18px;height:23px;background:#f0f0f0;border-right:1px solid #a0a0a0;border-bottom:1px solid #a0a0a0;box-shadow:inset 1px 1px 0 #fff,inset -1px -1px 0 #fafafa"></div>
<div style="left:18px;top:115px;width:15px;height:23px;background:#f0f0f0"></div>
<div style="left:33px;top:115px;width:482px;height:22px;background:#fff"></div>
<div style="left:33px;top:137px;width:482px;height:1px;background:#fff;background:repeating-linear-gradient(to right,#8c8c8c 0 1px,transparent 1px 2px)"></div>
<div style="left:18px;top:137px;width:15px;height:1px;background:repeating-linear-gradient(to right,#8c8c8c 0 1px,transparent 1px 2px)"></div>
<div style="left:33px;top:115px;width:1px;height:22px;background:repeating-linear-gradient(to bottom,#8c8c8c 0 1px,transparent 1px 2px)"></div>
<div style="left:56px;top:115px;width:1px;height:22px;background:repeating-linear-gradient(to bottom,#8c8c8c 0 1px,transparent 1px 2px)"></div>
<div style="left:309px;top:115px;width:1px;height:22px;background:repeating-linear-gradient(to bottom,#8c8c8c 0 1px,transparent 1px 2px)"></div>
<div style="left:470px;top:115px;width:1px;height:22px;background:repeating-linear-gradient(to bottom,#8c8c8c 0 1px,transparent 1px 2px)"></div>
<svg style="left:39px;top:119px" width="10.5" height="13" viewBox="0 0 11 14"><use href="#icDoc"/></svg>
<div class="t" style="left:59px;top:118px;color:#ff0000">Document.pdf</div>
<div class="t" style="left:312px;top:118px;color:#ff0000">Покупки</div>
<div class="t" style="left:473px;top:118px;color:#ff0000">Документ</div>
<div style="left:0;top:138px;width:18px;height:23px;background:#f0f0f0;border-right:1px solid #a0a0a0;border-bottom:1px solid #a0a0a0;box-shadow:inset 1px 1px 0 #fff,inset -1px -1px 0 #fafafa"></div>
<div style="left:18px;top:138px;width:497px;height:22px;background:#f0f0f0"></div>
<div style="left:33px;top:160px;width:482px;height:1px;background:#f0f0f0;background:repeating-linear-gradient(to right,#8c8c8c 0 1px,transparent 1px 2px)"></div>
<div style="left:20px;top:143px;width:12px;height:12px;background:#f4f4f4;border:1px solid #fff;border-right-color:#a0a0a0;border-bottom-color:#a0a0a0"></div>
<div style="left:23px;top:148px;width:6px;height:2px;background:linear-gradient(#000 50%,#666 50%)"></div>
<div class="t" style="left:34px;top:141px">Папка: Сайт</div>
<div style="left:0;top:161px;width:18px;height:23px;background:#f0f0f0;border-right:1px solid #a0a0a0;border-bottom:1px solid #a0a0a0;box-shadow:inset 1px 1px 0 #fff,inset -1px -1px 0 #fafafa"></div>
<div style="left:18px;top:161px;width:15px;height:23px;background:#f0f0f0"></div>
<div style="left:33px;top:161px;width:482px;height:22px;background:#fff"></div>
<div style="left:33px;top:183px;width:482px;height:1px;background:#fff;background:repeating-linear-gradient(to right,#8c8c8c 0 1px,transparent 1px 2px)"></div>
<div style="left:33px;top:161px;width:1px;height:22px;background:repeating-linear-gradient(to bottom,#8c8c8c 0 1px,transparent 1px 2px)"></div>
<div style="left:56px;top:161px;width:1px;height:22px;background:repeating-linear-gradient(to bottom,#8c8c8c 0 1px,transparent 1px 2px)"></div>
<div style="left:309px;top:161px;width:1px;height:22px;background:repeating-linear-gradient(to bottom,#8c8c8c 0 1px,transparent 1px 2px)"></div>
<div style="left:470px;top:161px;width:1px;height:22px;background:repeating-linear-gradient(to bottom,#8c8c8c 0 1px,transparent 1px 2px)"></div>
<svg style="left:39px;top:165px" width="10.5" height="13" viewBox="0 0 11 14"><use href="#icDoc"/></svg>
<div class="t" style="left:59px;top:164px;color:#000">Служебен: мета тагове на home page</div>
<div class="t" style="left:312px;top:164px;color:#000">Сайт</div>
<div class="t" style="left:473px;top:164px;color:#000">CMS страница</div>
<div style="left:0;top:184px;width:18px;height:23px;background:#f0f0f0;border-right:1px solid #a0a0a0;border-bottom:1px solid #a0a0a0;box-shadow:inset 1px 1px 0 #fff,inset -1px -1px 0 #fafafa"></div>
<div style="left:18px;top:184px;width:15px;height:23px;background:#f0f0f0"></div>
<div style="left:33px;top:184px;width:482px;height:22px;background:#fff"></div>
<div style="left:33px;top:206px;width:482px;height:1px;background:#fff;background:repeating-linear-gradient(to right,#8c8c8c 0 1px,transparent 1px 2px)"></div>
<div style="left:33px;top:184px;width:1px;height:22px;background:repeating-linear-gradient(to bottom,#8c8c8c 0 1px,transparent 1px 2px)"></div>
<div style="left:56px;top:184px;width:1px;height:22px;background:repeating-linear-gradient(to bottom,#8c8c8c 0 1px,transparent 1px 2px)"></div>
<div style="left:309px;top:184px;width:1px;height:22px;background:repeating-linear-gradient(to bottom,#8c8c8c 0 1px,transparent 1px 2px)"></div>
<div style="left:470px;top:184px;width:1px;height:22px;background:repeating-linear-gradient(to bottom,#8c8c8c 0 1px,transparent 1px 2px)"></div>
<svg style="left:39px;top:188px" width="10.5" height="13" viewBox="0 0 11 14"><use href="#icDoc"/></svg>
<div class="t" style="left:59px;top:187px;color:#000">Служебен: лога на марки</div>
<div class="t" style="left:312px;top:187px;color:#000">Сайт</div>
<div class="t" style="left:473px;top:187px;color:#000">CMS страница</div>
<div style="left:0;top:207px;width:18px;height:23px;background:#f0f0f0;border-right:1px solid #a0a0a0;border-bottom:1px solid #a0a0a0;box-shadow:inset 1px 1px 0 #fff,inset -1px -1px 0 #fafafa"></div>
<div style="left:18px;top:207px;width:15px;height:23px;background:#f0f0f0"></div>
<div style="left:33px;top:207px;width:482px;height:22px;background:#fff"></div>
<div style="left:33px;top:229px;width:482px;height:1px;background:#fff;background:repeating-linear-gradient(to right,#8c8c8c 0 1px,transparent 1px 2px)"></div>
<div style="left:33px;top:207px;width:1px;height:22px;background:repeating-linear-gradient(to bottom,#8c8c8c 0 1px,transparent 1px 2px)"></div>
<div style="left:56px;top:207px;width:1px;height:22px;background:repeating-linear-gradient(to bottom,#8c8c8c 0 1px,transparent 1px 2px)"></div>
<div style="left:309px;top:207px;width:1px;height:22px;background:repeating-linear-gradient(to bottom,#8c8c8c 0 1px,transparent 1px 2px)"></div>
<div style="left:470px;top:207px;width:1px;height:22px;background:repeating-linear-gradient(to bottom,#8c8c8c 0 1px,transparent 1px 2px)"></div>
<svg style="left:39px;top:211px" width="10.5" height="13" viewBox="0 0 11 14"><use href="#icDoc"/></svg>
<div class="t" style="left:59px;top:210px;color:#000">Служебен: текст във футер</div>
<div class="t" style="left:312px;top:210px;color:#000">Сайт</div>
<div class="t" style="left:473px;top:210px;color:#000">CMS страница</div>
<div style="left:0;top:230px;width:18px;height:23px;background:#f0f0f0;border-right:1px solid #a0a0a0;border-bottom:1px solid #a0a0a0;box-shadow:inset 1px 1px 0 #fff,inset -1px -1px 0 #fafafa"></div>
<div style="left:18px;top:230px;width:15px;height:23px;background:#f0f0f0"></div>
<div style="left:33px;top:230px;width:482px;height:22px;background:#fff"></div>
<div style="left:33px;top:252px;width:482px;height:1px;background:#fff;background:repeating-linear-gradient(to right,#8c8c8c 0 1px,transparent 1px 2px)"></div>
<div style="left:33px;top:230px;width:1px;height:22px;background:repeating-linear-gradient(to bottom,#8c8c8c 0 1px,transparent 1px 2px)"></div>
<div style="left:56px;top:230px;width:1px;height:22px;background:repeating-linear-gradient(to bottom,#8c8c8c 0 1px,transparent 1px 2px)"></div>
<div style="left:309px;top:230px;width:1px;height:22px;background:repeating-linear-gradient(to bottom,#8c8c8c 0 1px,transparent 1px 2px)"></div>
<div style="left:470px;top:230px;width:1px;height:22px;background:repeating-linear-gradient(to bottom,#8c8c8c 0 1px,transparent 1px 2px)"></div>
<svg style="left:39px;top:234px" width="10.5" height="13" viewBox="0 0 11 14"><use href="#icDoc"/></svg>
<div class="t" style="left:59px;top:233px;color:#000">Служебен: условия на доставка на продукт</div>
<div class="t" style="left:312px;top:233px;color:#000">Сайт</div>
<div class="t" style="left:473px;top:233px;color:#000">CMS страница</div>
<div style="left:0;top:253px;width:18px;height:23px;background:#f0f0f0;border-right:1px solid #a0a0a0;border-bottom:1px solid #a0a0a0;box-shadow:inset 1px 1px 0 #fff,inset -1px -1px 0 #fafafa"></div>
<div style="left:18px;top:253px;width:15px;height:23px;background:#f0f0f0"></div>
<div style="left:33px;top:253px;width:482px;height:22px;background:#fff"></div>
<div style="left:33px;top:275px;width:482px;height:1px;background:#fff;background:repeating-linear-gradient(to right,#8c8c8c 0 1px,transparent 1px 2px)"></div>
<div style="left:33px;top:253px;width:1px;height:22px;background:repeating-linear-gradient(to bottom,#8c8c8c 0 1px,transparent 1px 2px)"></div>
<div style="left:56px;top:253px;width:1px;height:22px;background:repeating-linear-gradient(to bottom,#8c8c8c 0 1px,transparent 1px 2px)"></div>
<div style="left:309px;top:253px;width:1px;height:22px;background:repeating-linear-gradient(to bottom,#8c8c8c 0 1px,transparent 1px 2px)"></div>
<div style="left:470px;top:253px;width:1px;height:22px;background:repeating-linear-gradient(to bottom,#8c8c8c 0 1px,transparent 1px 2px)"></div>
<svg style="left:39px;top:257px" width="10.5" height="13" viewBox="0 0 11 14"><use href="#icDoc"/></svg>
<div class="t" style="left:59px;top:256px;color:#000">Служебен: условия на доставка в количка</div>
<div class="t" style="left:312px;top:256px;color:#000">Сайт</div>
<div class="t" style="left:473px;top:256px;color:#000">CMS страница</div>
<div style="left:0;top:276px;width:18px;height:23px;background:#f0f0f0;border-right:1px solid #a0a0a0;border-bottom:1px solid #a0a0a0;box-shadow:inset 1px 1px 0 #fff,inset -1px -1px 0 #fafafa"></div>
<div style="left:18px;top:276px;width:15px;height:23px;background:#f0f0f0"></div>
<div style="left:33px;top:276px;width:482px;height:22px;background:#fff"></div>
<div style="left:33px;top:298px;width:482px;height:1px;background:#fff;background:repeating-linear-gradient(to right,#8c8c8c 0 1px,transparent 1px 2px)"></div>
<div style="left:18px;top:298px;width:15px;height:1px;background:repeating-linear-gradient(to right,#8c8c8c 0 1px,transparent 1px 2px)"></div>
<div style="left:33px;top:276px;width:1px;height:22px;background:repeating-linear-gradient(to bottom,#8c8c8c 0 1px,transparent 1px 2px)"></div>
<div style="left:56px;top:276px;width:1px;height:22px;background:repeating-linear-gradient(to bottom,#8c8c8c 0 1px,transparent 1px 2px)"></div>
<div style="left:309px;top:276px;width:1px;height:22px;background:repeating-linear-gradient(to bottom,#8c8c8c 0 1px,transparent 1px 2px)"></div>
<div style="left:470px;top:276px;width:1px;height:22px;background:repeating-linear-gradient(to bottom,#8c8c8c 0 1px,transparent 1px 2px)"></div>
<svg style="left:39px;top:280px" width="10.5" height="13" viewBox="0 0 11 14"><use href="#icDoc"/></svg>
<div class="t" style="left:59px;top:279px;color:#000">Служебен: текст за търсачка</div>
<div class="t" style="left:312px;top:279px;color:#000">Сайт</div>
<div class="t" style="left:473px;top:279px;color:#000">CMS страница</div>
<div style="left:0;top:299px;width:18px;height:23px;background:#f0f0f0;border-right:1px solid #a0a0a0;border-bottom:1px solid #a0a0a0;box-shadow:inset 1px 1px 0 #fff,inset -1px -1px 0 #fafafa"></div>
<div style="left:18px;top:299px;width:497px;height:22px;background:#f0f0f0"></div>
<div style="left:33px;top:321px;width:482px;height:1px;background:#f0f0f0;background:repeating-linear-gradient(to right,#8c8c8c 0 1px,transparent 1px 2px)"></div>
<div style="left:20px;top:304px;width:12px;height:12px;background:#f4f4f4;border:1px solid #fff;border-right-color:#a0a0a0;border-bottom-color:#a0a0a0"></div>
<div style="left:23px;top:309px;width:6px;height:2px;background:linear-gradient(#000 50%,#666 50%)"></div>
<div class="t" style="left:34px;top:302px">Папка: Снимки на контрагенти</div>
<div style="left:0;top:322px;width:18px;height:23px;background:#f0f0f0;border-right:1px solid #a0a0a0;border-bottom:1px solid #a0a0a0;box-shadow:inset 1px 1px 0 #fff,inset -1px -1px 0 #fafafa"></div>
<div style="left:18px;top:322px;width:15px;height:23px;background:#f0f0f0"></div>
<div style="left:33px;top:322px;width:482px;height:22px;background:#fff"></div>
<div style="left:33px;top:344px;width:482px;height:1px;background:#808080"></div>
<div style="left:18px;top:344px;width:15px;height:1px;background:repeating-linear-gradient(to right,#8c8c8c 0 1px,transparent 1px 2px)"></div>
<div style="left:33px;top:322px;width:1px;height:22px;background:repeating-linear-gradient(to bottom,#8c8c8c 0 1px,transparent 1px 2px)"></div>
<div style="left:56px;top:322px;width:1px;height:22px;background:repeating-linear-gradient(to bottom,#8c8c8c 0 1px,transparent 1px 2px)"></div>
<div style="left:309px;top:322px;width:1px;height:22px;background:repeating-linear-gradient(to bottom,#8c8c8c 0 1px,transparent 1px 2px)"></div>
<div style="left:470px;top:322px;width:1px;height:22px;background:repeating-linear-gradient(to bottom,#8c8c8c 0 1px,transparent 1px 2px)"></div>
<svg style="left:39px;top:326px" width="10.5" height="13" viewBox="0 0 11 14"><use href="#icDoc"/></svg>
<div class="t" style="left:59px;top:325px;color:#ff0000">KauflandSofiaMap.png</div>
<div class="t" style="left:312px;top:325px;color:#ff0000">Снимки на контрагенти</div>
<div class="t" style="left:473px;top:325px;color:#ff0000">Изображение</div>
</div>
<div style="left:468px;top:607px;width:514px;height:19px;background:#f0f0f0"></div>
<div class="t" style="left:472px;top:609px;font-size:11.5px">Запис:</div>
<div style="left:512px;top:608px;width:17px;height:17px;background:#f0f0f0;border:1px solid #fff;border-right-color:#a0a0a0;border-bottom-color:#a0a0a0"></div>
<div style="left:529px;top:608px;width:19px;height:17px;background:#f0f0f0;border:1px solid #fff;border-right-color:#a0a0a0;border-bottom-color:#a0a0a0"></div>
<div style="left:637px;top:608px;width:17px;height:17px;background:#f0f0f0;border:1px solid #fff;border-right-color:#a0a0a0;border-bottom-color:#a0a0a0"></div>
<div style="left:654px;top:608px;width:19px;height:17px;background:#f0f0f0;border:1px solid #fff;border-right-color:#a0a0a0;border-bottom-color:#a0a0a0"></div>
<svg style="left:517px;top:612px" width="10" height="10"><rect x="0" y="0" width="2" height="10"/><path d="M9 0V10L3.5 5Z"/></svg>
<svg style="left:535px;top:612px" width="8" height="10"><path d="M6 0V10L0.5 5Z" fill="#a0a0a0"/></svg>
<svg style="left:642px;top:612px" width="8" height="10"><path d="M1 0V10L6.5 5Z"/></svg>
<svg style="left:658px;top:612px" width="10" height="10"><path d="M0 0V10L5.5 5Z"/><rect x="7" y="0" width="2" height="10"/></svg>
<div style="left:552px;top:608px;width:46px;height:17px;background:#fff;border:1px solid #a0a0a0;border-right-color:#fff;border-bottom:none"></div>
<div class="t" style="left:603px;top:609px;font-size:11.5px">от 10</div>
<svg style="left:677px;top:611px" width="8" height="11"><path d="M6 1L2 5.5L6 10" stroke="#444" stroke-width="1.6" fill="none"/></svg>
<div style="left:690px;top:609px;width:138px;height:14px;background:#c8c8c8"></div>
<svg style="left:970px;top:611px" width="8" height="11"><path d="M2 1L6 5.5L2 10" stroke="#444" stroke-width="1.6" fill="none"/></svg>
<div style="left:217px;top:311px;width:2px;height:30px;background:repeating-linear-gradient(to bottom,#a0a0a0 0 1px,transparent 1px 3px)"></div>
<svg style="left:216px;top:342px" width="5" height="16"><path d="M4 1V7L1 4Z" fill="#a0a0a0"/><path d="M1 9V15L4 12Z" fill="#a0a0a0"/></svg>
<div style="left:217px;top:362px;width:2px;height:33px;background:repeating-linear-gradient(to bottom,#a0a0a0 0 1px,transparent 1px 3px)"></div>
<div style="left:464px;top:339px;width:2px;height:29px;background:repeating-linear-gradient(to bottom,#a0a0a0 0 1px,transparent 1px 3px)"></div>
<svg style="left:463px;top:370px" width="5" height="16"><path d="M4 1V7L1 4Z" fill="#a0a0a0"/><path d="M1 9V15L4 12Z" fill="#a0a0a0"/></svg>
<div style="left:464px;top:390px;width:2px;height:32px;background:repeating-linear-gradient(to bottom,#a0a0a0 0 1px,transparent 1px 3px)"></div>
<div style="left:215px;top:81px;width:1px;height:545px;background:#fafafa"></div>
<div style="left:1px;top:626px;width:984px;height:1px;background:#dadada"></div>
<div style="left:1px;top:627px;width:984px;height:1px;background:#fafafa"></div>
<div class="t" style="left:6px;top:629px;letter-spacing:-0.15px">10 записа (1 групиран)</div>
<div style="left:572px;top:630px;width:1px;height:15px;background:#d0d0d0"></div>
<div style="left:640px;top:630px;width:1px;height:15px;background:#d0d0d0"></div>
<div style="left:708px;top:630px;width:1px;height:15px;background:#d0d0d0"></div>
<div style="left:899px;top:630px;width:1px;height:15px;background:#d0d0d0"></div>
<div style="left:965px;top:630px;width:1px;height:15px;background:#d0d0d0"></div>
<div class="t" style="left:580px;top:629px;letter-spacing:-0.58px">0.09s (107)</div>
<div class="t" style="left:666px;top:629px;letter-spacing:-0.5px">Dreem</div>
<div class="t" style="left:731px;top:629px;letter-spacing:-0.42px">UCSDB02 / Dreem15_HelpDocs</div>
<div class="t" style="left:904px;top:629px;letter-spacing:-0.36px">14.5.2024 г.</div>
<div style="left:1px;top:645px;width:984px;height:1px;background:#f7f7f7"></div>
<svg style="left:646px;top:629px" width="17" height="17"><path d="M1.5 1Q1.5 0.5 2.5 0.5H9V15.5H1.5Q0.5 15.5 0.5 14.5V2Z" fill="#c8e4c8" stroke="#888"/><path d="M1.5 2.5H8.5M1.5 5.5H8.5" stroke="#fff" stroke-width="1.4"/><path d="M5 14.5Q4.5 9 6.5 5Q8 1 11.5 1Q15.5 1.2 15.5 5V12Q15 14.5 13 15H5Z" fill="#000"/><path d="M9.5 5Q11.5 3.8 13.5 5L14 7.5L15 8.5L14 9V11.5L12 12.5L10.5 14L8.5 13Q10 10 8.5 8Z" fill="#fff"/><rect x="12.5" y="6.5" width="1.5" height="1.5" fill="#1030ff"/><path d="M5.5 13.5H9L10.5 15H12.5L14 13.5H16V16H5.5Z" fill="#0010c8"/><circle cx="5.5" cy="12.5" r="0.9" fill="#f00"/></svg>
<svg style="left:713px;top:631px" width="17" height="14"><rect x="0.5" y="0.5" width="15" height="7" rx="1.5" fill="#c8e6c8" stroke="#333"/><path d="M2 2H14" stroke="#fff"/><path d="M2.5 5.5H12.5" stroke="#888"/><rect x="11.5" y="2.5" width="2" height="1.5" fill="#10c010"/><path d="M8 8V11" stroke="#000" stroke-width="1.2"/><path d="M0 11.5H16" stroke="#000" stroke-width="1.2"/><rect x="6" y="10" width="4" height="3" fill="#e8e000" stroke="#333" stroke-width="0.6"/></svg>
<svg style="left:974px;top:635px" width="10" height="10"><rect x="7" y="1" width="2" height="2" fill="#c0c0c0"/><rect x="4" y="4" width="2" height="2" fill="#c0c0c0"/><rect x="7" y="4" width="2" height="2" fill="#c0c0c0"/><rect x="1" y="7" width="2" height="2" fill="#c0c0c0"/><rect x="4" y="7" width="2" height="2" fill="#c0c0c0"/><rect x="7" y="7" width="2" height="2" fill="#c0c0c0"/></svg>
<div style="left:0px;top:0px;width:986px;height:1px;background:#6a6a6a"></div>
<div style="left:0px;top:0px;width:1px;height:58px;background:#16304f"></div>
<div style="left:0px;top:58px;width:1px;height:590px;background:#6d6d6d"></div>
<div style="left:985px;top:0px;width:1px;height:648px;background:#6d6d6d"></div>
<div style="left:984px;top:32px;width:1px;height:614px;background:#f4f4f4"></div>
<div style="left:0px;top:646px;width:986px;height:1px;background:#707070"></div>
<div style="left:0px;top:647px;width:986px;height:1px;background:#ffffff"></div>
<svg width="0" height="0" style="position:absolute"><defs>
<linearGradient id="gR" x1="0" y1="0" x2="0" y2="1"><stop offset="0" stop-color="#000"/><stop offset="0.25" stop-color="#150000"/><stop offset="0.55" stop-color="#902008"/><stop offset="0.85" stop-color="#d04818"/><stop offset="1" stop-color="#ff2010"/></linearGradient>
<linearGradient id="gN" x1="0" y1="0" x2="0" y2="1"><stop offset="0" stop-color="#281460"/><stop offset="1" stop-color="#000010"/></linearGradient>
<symbol id="icL" viewBox="0 0 16 16"><rect x="0" y="0" width="15.5" height="16" fill="#000"/><rect x="1" y="1" width="14.5" height="14" fill="url(#gR)"/><rect x="1" y="15" width="14.5" height="1" fill="#fff"/><rect x="9.5" y="1" width="6" height="8" fill="#000"/><rect x="10.5" y="1" width="5" height="7" fill="#fff"/><path d="M12 2V6.5H14.5" stroke="#000" fill="none"/><rect x="1.5" y="6.5" width="2.5" height="7.5" rx="0.8" fill="#2222b8"/><rect x="5" y="8.5" width="2.5" height="5.5" rx="0.8" fill="#2222b8"/><path d="M8.5 14V11.5M7.5 12.5H9.5M11.5 14V11M10.5 12H12.5M14 14V11.5" stroke="#000" stroke-width="1.1"/></symbol>
<symbol id="icR" viewBox="0 0 16 16"><rect x="0" y="0" width="15.5" height="16" fill="#000"/><rect x="1" y="1" width="14.5" height="14" fill="url(#gN)"/><rect x="1" y="15" width="14.5" height="1" fill="#fff"/><path d="M1 7L8 3L15.5 6V15H8Z" fill="#b8bcc8"/><path d="M1 7L8 3L9.5 5L2 9Z" fill="#f4f6fa"/><path d="M2 9L9.5 5L15.5 8V11L6 15H4Z" fill="#d6dae4"/><path d="M5 13L13 9" stroke="#9aa0b0" stroke-width="0.8"/><rect x="9.5" y="1" width="6" height="8" fill="#000"/><rect x="10.5" y="1" width="5" height="7" fill="#fff"/><path d="M11.8 6.5V2.5H13.3A1.05 1.05 0 0 1 13.3 4.6H11.8M13 4.6L14.6 6.5" stroke="#000" fill="none"/></symbol>
<linearGradient id="gF" x1="0" y1="0" x2="0" y2="1"><stop offset="0" stop-color="#fbe3a6"/><stop offset="1" stop-color="#eec675"/></linearGradient>
<symbol id="icFc" viewBox="0 0 14 16"><path d="M0.5 1.5Q0.5 0.5 1.5 0.5H10.5Q11.5 0.5 11.5 1.5V13.5Q11.5 14.5 10.5 14.5H1.5Q0.5 14.5 0.5 13.5Z" fill="url(#gF)" stroke="#d8aa52"/><rect x="11.2" y="6.5" width="1.8" height="7" fill="#fff" stroke="#e0b860" stroke-width="0.6"/><rect x="11.2" y="10" width="1.8" height="3.2" fill="#30a8f0"/></symbol>
<symbol id="icFo" viewBox="0 0 14 16"><path d="M0.5 1.5Q0.5 0.5 1.5 0.5H10.5Q11.5 0.5 11.5 1.5V12.5Q11.5 13.5 10.5 13.5H1.5Q0.5 13.5 0.5 12.5Z" fill="url(#gF)" stroke="#d8aa52"/><path d="M0.5 1L5.5 2.8V15.5L0.5 13.5Z" fill="#fbe6a2" stroke="#d4a448"/><rect x="11.2" y="6.5" width="1.8" height="6" fill="#fff" stroke="#e0b860" stroke-width="0.6"/><rect x="11.2" y="9.5" width="1.8" height="3" fill="#30a8f0"/></symbol>
<linearGradient id="gA" x1="0" y1="0" x2="0" y2="1"><stop offset="0" stop-color="#8fd4ff"/><stop offset="1" stop-color="#1a7fe0"/></linearGradient>
<symbol id="icArrow" viewBox="0 0 13 13"><path d="M0.5 4H6V0.5L12.5 6.5L6 12.5V9H0.5Z" fill="url(#gA)" stroke="#2a8ad8" stroke-width="0.8"/></symbol>
<linearGradient id="gD" x1="0" y1="0" x2="1" y2="1"><stop offset="0" stop-color="#fff"/><stop offset="1" stop-color="#dde8ee"/></linearGradient>
<symbol id="icDoc" viewBox="0 0 11 14"><path d="M0.5 0.5H7L10.5 4V13.5H0.5Z" fill="url(#gD)" stroke="#8a9a9a"/><path d="M7 0.5V4H10.5" fill="#fff" stroke="#8a9a9a"/></symbol>
</defs></svg>
</body></html>
